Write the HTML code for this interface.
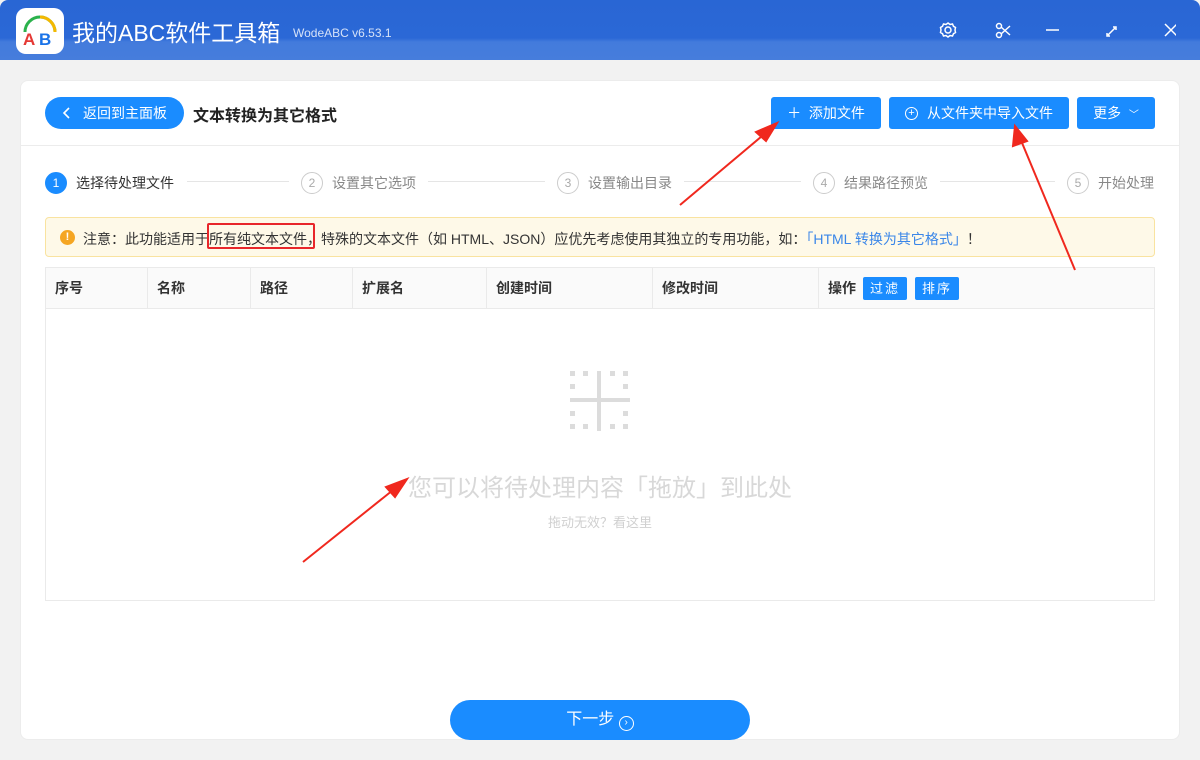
<!DOCTYPE html>
<html><head><meta charset="utf-8"><style>
*{margin:0;padding:0;box-sizing:border-box}
body{width:1200px;height:760px;overflow:hidden;background:#f2f2f2;font-family:"Liberation Sans","Noto Sans CJK SC",sans-serif;position:relative}
.abs{position:absolute}
.title{left:0;top:0;width:1200px;height:60px;background:linear-gradient(180deg,#2966d4 0,#2b68d6 38px,#437bdc 42px,#467ddc 60px);border-radius:8px 8px 0 0}
.card{left:20px;top:80px;width:1160px;height:660px;background:#fff;border-radius:8px;border:1px solid #ececec}
.btn{background:#1a8cff;color:#fff;font-size:14px;display:flex;align-items:center;justify-content:center;border-radius:3px;height:32px;top:97px}
.step{font-size:14px;color:#888;top:172px;display:flex;align-items:center}
.circ{width:22px;height:22px;border-radius:50%;border:1px solid #ccc;color:#aaa;font-size:12px;display:flex;align-items:center;justify-content:center;margin-right:9px}
.line{height:1px;background:#e5e5e5;top:181px}
.th{top:268px;height:40px;font-size:14px;font-weight:bold;color:#333;line-height:40px;border-right:1px solid #eaeaea;padding-left:9px;background:#fafafa}
</style></head><body>
<div class="abs title"></div>
<div class="abs" style="left:16px;top:8px;width:48px;height:46px;background:#fff;border-radius:10px"></div>
<svg class="abs" style="left:16px;top:8px" width="48" height="46" viewBox="0 0 48 46">
<path d="M9 24 A15 15 0 0 1 39 24" fill="none" stroke="#2bb24c" stroke-width="3"/>
<path d="M24 9 A15 15 0 0 1 39 24" fill="none" stroke="#f5b800" stroke-width="3"/>
<text x="7" y="37" font-size="17" font-weight="bold" fill="#e53935" font-family="Liberation Sans">A</text>
<text x="23" y="37" font-size="17" font-weight="bold" fill="#1a73e8" font-family="Liberation Sans">B</text>
</svg>
<div class="abs" style="left:72px;top:14px;color:#fff;font-size:23px">我的ABC软件工具箱</div>
<div class="abs" style="left:293px;top:26px;color:#d6e2f8;font-size:12px">WodeABC v6.53.1</div>
<svg class="abs" style="left:936px;top:20px" width="240" height="20" viewBox="0 0 240 20" fill="none" stroke="#fff" stroke-width="1.5">
<circle cx="12" cy="10" r="3"/><path d="M12 3l2 1.5 2.5-.5 1 2.3 2 1.2-.5 2.5.5 2.5-2 1.2-1 2.3-2.5-.5L12 17l-2-1.5-2.5.5-1-2.3-2-1.2.5-2.5-.5-2.5 2-1.2 1-2.3 2.5.5z"/>
<circle cx="63" cy="6" r="2.5"/><circle cx="63" cy="15" r="2.5"/><path d="M65 7l9 8M65 14l9-8"/>
<path d="M110 10h13"/>
<path d="M172 15l7-7M177 7h3v3M174 16h-3v-3"/>
<path d="M231 4l12 12M243 4l-12 12" transform="translate(-2,0)"/>
</svg>
<div class="abs card"></div>
<div class="abs" style="left:45px;top:97px;width:139px;height:32px;border-radius:16px;background:#1a8cff;color:#fff;font-size:14px;line-height:32px;padding-left:38px">返回到主面板</div>
<svg class="abs" style="left:62px;top:106px" width="10" height="14"><path d="M7 2L2 7l5 5" fill="none" stroke="#fff" stroke-width="1.6"/></svg>
<div class="abs" style="left:193px;top:102px;font-size:16px;color:#222;font-weight:bold">文本转换为其它格式</div>
<div class="abs btn" style="left:771px;width:110px">＋&nbsp;&nbsp;添加文件</div>
<div class="abs btn" style="left:889px;width:180px"><span style="display:inline-block;width:13px;height:13px;border:1.4px solid #fff;border-radius:50%;font-size:11px;line-height:10px;text-align:center;margin-right:9px">+</span>从文件夹中导入文件</div>
<div class="abs btn" style="left:1077px;width:78px">更多&nbsp;&nbsp;<span style="font-size:10px">﹀</span></div>
<div class="abs" style="left:21px;top:145px;width:1158px;height:1px;background:#ececec"></div>
<div class="abs step" style="left:45px;color:#333"><div class="circ" style="background:#1a8cff;border-color:#1a8cff;color:#fff">1</div>选择待处理文件</div>
<div class="abs line" style="left:187px;width:102px"></div>
<div class="abs step" style="left:301px"><div class="circ">2</div>设置其它选项</div>
<div class="abs line" style="left:428px;width:117px"></div>
<div class="abs step" style="left:557px"><div class="circ">3</div>设置输出目录</div>
<div class="abs line" style="left:684px;width:117px"></div>
<div class="abs step" style="left:813px"><div class="circ">4</div>结果路径预览</div>
<div class="abs line" style="left:940px;width:115px"></div>
<div class="abs step" style="left:1067px;color:#888"><div class="circ">5</div>开始处理</div>
<div class="abs" style="left:45px;top:217px;width:1110px;height:40px;background:#fef9e8;border:1px solid #f9e3a0;border-radius:4px"></div>
<div class="abs" style="left:60px;top:230px;width:15px;height:15px;border-radius:50%;background:#f5a623;color:#fff;font-size:11px;font-weight:bold;text-align:center;line-height:15px">!</div>
<div class="abs" style="left:83px;top:229px;font-size:14px;color:#333;white-space:nowrap">注意：此功能适用于所有纯文本文件，特殊的文本文件（如 HTML、JSON）应优先考虑使用其独立的专用功能，如：<span style="color:#3a86e8">「HTML 转换为其它格式」</span>！</div>
<div class="abs" style="left:207px;top:223px;width:108px;height:26px;border:2px solid #e8262a;border-radius:2px"></div>
<div class="abs" style="left:45px;top:267px;width:1110px;height:334px;border:1px solid #eaeaea"></div>
<div class="abs th" style="left:46px;width:102px">序号</div>
<div class="abs th" style="left:148px;width:103px">名称</div>
<div class="abs th" style="left:251px;width:102px">路径</div>
<div class="abs th" style="left:353px;width:134px">扩展名</div>
<div class="abs th" style="left:487px;width:166px">创建时间</div>
<div class="abs th" style="left:653px;width:166px">修改时间</div>
<div class="abs th" style="left:819px;width:335px;border-right:none">操作</div>
<div class="abs" style="left:863px;top:277px;width:44px;height:23px;background:#1a8cff;color:#fff;font-size:13px;text-align:center;line-height:23px;border-radius:2px;letter-spacing:2px">过滤</div>
<div class="abs" style="left:915px;top:277px;width:44px;height:23px;background:#1a8cff;color:#fff;font-size:13px;text-align:center;line-height:23px;border-radius:2px;letter-spacing:2px">排序</div>
<div class="abs" style="left:46px;top:308px;width:1108px;height:1px;background:#eaeaea"></div>
<svg class="abs" style="left:570px;top:371px" width="60" height="60" fill="#dcdcdc">
<rect x="27" y="0" width="4" height="60"/><rect x="0" y="27" width="60" height="4"/>
<rect x="0" y="0" width="5" height="5"/><rect x="13" y="0" width="5" height="5"/><rect x="40" y="0" width="5" height="5"/><rect x="53" y="0" width="5" height="5"/>
<rect x="0" y="13" width="5" height="5"/><rect x="53" y="13" width="5" height="5"/>
<rect x="0" y="40" width="5" height="5"/><rect x="53" y="40" width="5" height="5"/>
<rect x="0" y="53" width="5" height="5"/><rect x="13" y="53" width="5" height="5"/><rect x="40" y="53" width="5" height="5"/><rect x="53" y="53" width="5" height="5"/>
</svg>
<div class="abs" style="left:0;width:1200px;top:468px;text-align:center;font-size:24px;color:#d8d8d8">您可以将待处理内容「拖放」到此处</div>
<div class="abs" style="left:0;width:1200px;top:512px;text-align:center;font-size:13px;color:#d0d0d0">拖动无效？看这里</div>
<div class="abs" style="left:450px;top:700px;width:300px;height:40px;border-radius:20px;background:#1a8cff;color:#fff;font-size:16px;text-align:center;line-height:40px">下一步 <span style="display:inline-block;width:15px;height:15px;border:1.4px solid #fff;border-radius:50%;font-size:10px;line-height:12px;vertical-align:-1px">›</span></div>
<svg class="abs" style="left:0;top:0" width="1200" height="760">
<g stroke="#f0281e" stroke-width="2" fill="#f0281e">
<line x1="680" y1="205" x2="768" y2="131"/><polygon points="777,123 756,132 766,141"/>
<line x1="1075" y1="270" x2="1020" y2="138"/><polygon points="1015,126 1013,146 1027,141"/>
<line x1="303" y1="562" x2="398" y2="486"/><polygon points="407,479 386,487 395,497"/>
</g></svg>
</body></html>
